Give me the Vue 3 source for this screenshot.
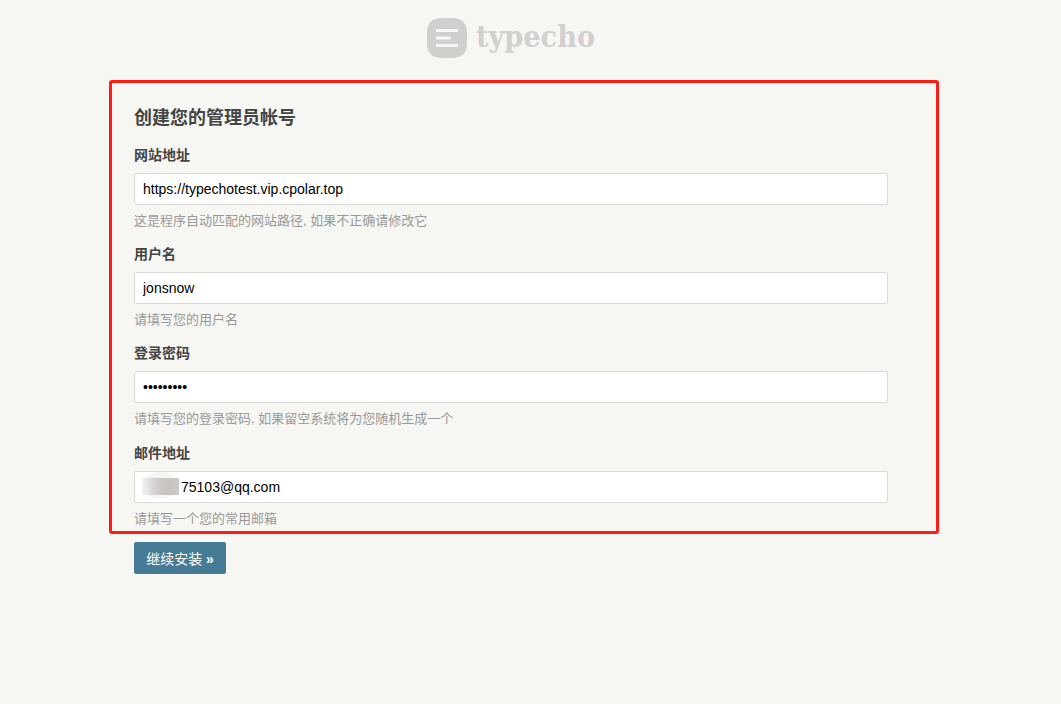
<script setup>
const fields = [
  { label: '网站地址', type: 'text', value: 'https://typechotest.vip.cpolar.top', note: '这是程序自动匹配的网站路径, 如果不正确请修改它' },
  { label: '用户名', type: 'text', value: 'jonsnow', note: '请填写您的用户名' },
  { label: '登录密码', type: 'password', value: 'password1', note: '请填写您的登录密码, 如果留空系统将为您随机生成一个' },
  { label: '邮件地址', type: 'text', value: '75103@qq.com', note: '请填写一个您的常用邮箱', masked: true },
]
</script>

<template>
  <div class="page">
    <header class="brand">
      <svg class="mark" width="40" height="40" viewBox="0 0 40 40" aria-hidden="true">
        <path d="M15 0H25C35 0 40 5 40 15V25C40 35 35 40 25 40H15C5 40 0 35 0 25V15C0 5 5 0 15 0Z" fill="#cfcfcd" />
        <rect x="9" y="11" width="22" height="3" fill="#f6f6f3" />
        <rect x="9" y="18.5" width="15" height="3" fill="#f6f6f3" />
        <rect x="9" y="26" width="22" height="3" fill="#f6f6f3" />
      </svg>
      <span class="word">typecho</span>
    </header>

    <main class="box">
      <h1 class="title">创建您的管理员帐号</h1>
      <div v-for="f in fields" :key="f.label" class="field">
        <label class="label">{{ f.label }}</label>
        <div class="control">
          <input class="input" :class="{ 'input-masked': f.masked }" :type="f.type" :value="f.value" readonly />
          <span v-if="f.masked" class="blur"><span class="blur-core"></span></span>
        </div>
        <p class="note">{{ f.note }}</p>
      </div>
    </main>

    <button class="submit" type="button">继续安装 <b>»</b></button>
  </div>
</template>

<style scoped>
.page {
  height: 704px;
  box-sizing: border-box;
  overflow: hidden;
  font-family: "Liberation Sans", "Noto Sans CJK SC", sans-serif;
  font-size: 14px;
  color: #444;
  background: #f6f6f3;
}
.brand {
  height: 80px;
  box-sizing: border-box;
  padding: 18px 0 0 427px;
  display: flex;
  gap: 9px;
  align-items: flex-start;
}
.mark { display: block; }
.word {
  font-family: "DejaVu Serif", serif;
  font-stretch: condensed;
  font-weight: 700;
  font-size: 30.2px;
  line-height: 38px;
  color: #d0d0ce;
}
.box {
  width: 830px;
  height: 454px;
  margin-left: 109px;
  box-sizing: border-box;
  border: 3px solid #ff1c14;
  border-radius: 3px;
  padding: 21px 0 0 22px;
}
.title {
  margin: 0 0 13px;
  font-size: 18px;
  line-height: 28px;
  font-weight: 700;
  color: #444;
}
.field { height: 99px; }
.field:last-child { margin-top: 1px; }
.label {
  display: block;
  height: 20px;
  line-height: 20px;
  font-weight: 700;
  margin-bottom: 8px;
}
.control { position: relative; width: 754px; }
.input {
  display: block;
  width: 100%;
  height: 32px;
  box-sizing: border-box;
  padding: 0 8px;
  border: 1px solid #d9d9d6;
  border-radius: 2px;
  background: #fff;
  color: #000;
  font: 14px "Liberation Sans", sans-serif;
  outline: none;
}
.input-masked { padding-left: 46px; }
.blur {
  position: absolute;
  left: 8px;
  top: 1px;
  width: 37px;
  height: 27px;
  border-radius: 50%;
  background: #f5f5f4;
}
.blur-core {
  position: absolute;
  left: 0;
  right: 0;
  top: 6px;
  height: 17px;
  background: linear-gradient(90deg, #f3f3f2 0, #e4e3e2 18%, #d8d6d5 30%, #ccc8c6 50%, #c7c5c3 75%, #cbcac8 100%);
  filter: blur(0.6px);
}
.note {
  margin: 6px 0 0;
  font-size: 13px;
  line-height: 20px;
  color: #999;
}
.submit {
  display: block;
  margin: 8px 0 0 134px;
  width: 92px;
  height: 32px;
  padding: 0 0 1px;
  border: 0;
  border-radius: 2px;
  background: #467b96;
  color: #fff;
  font: 14px "Liberation Sans", "Noto Sans CJK SC", sans-serif;
}
</style>

<style>
body { background: #f6f6f3; }
</style>
